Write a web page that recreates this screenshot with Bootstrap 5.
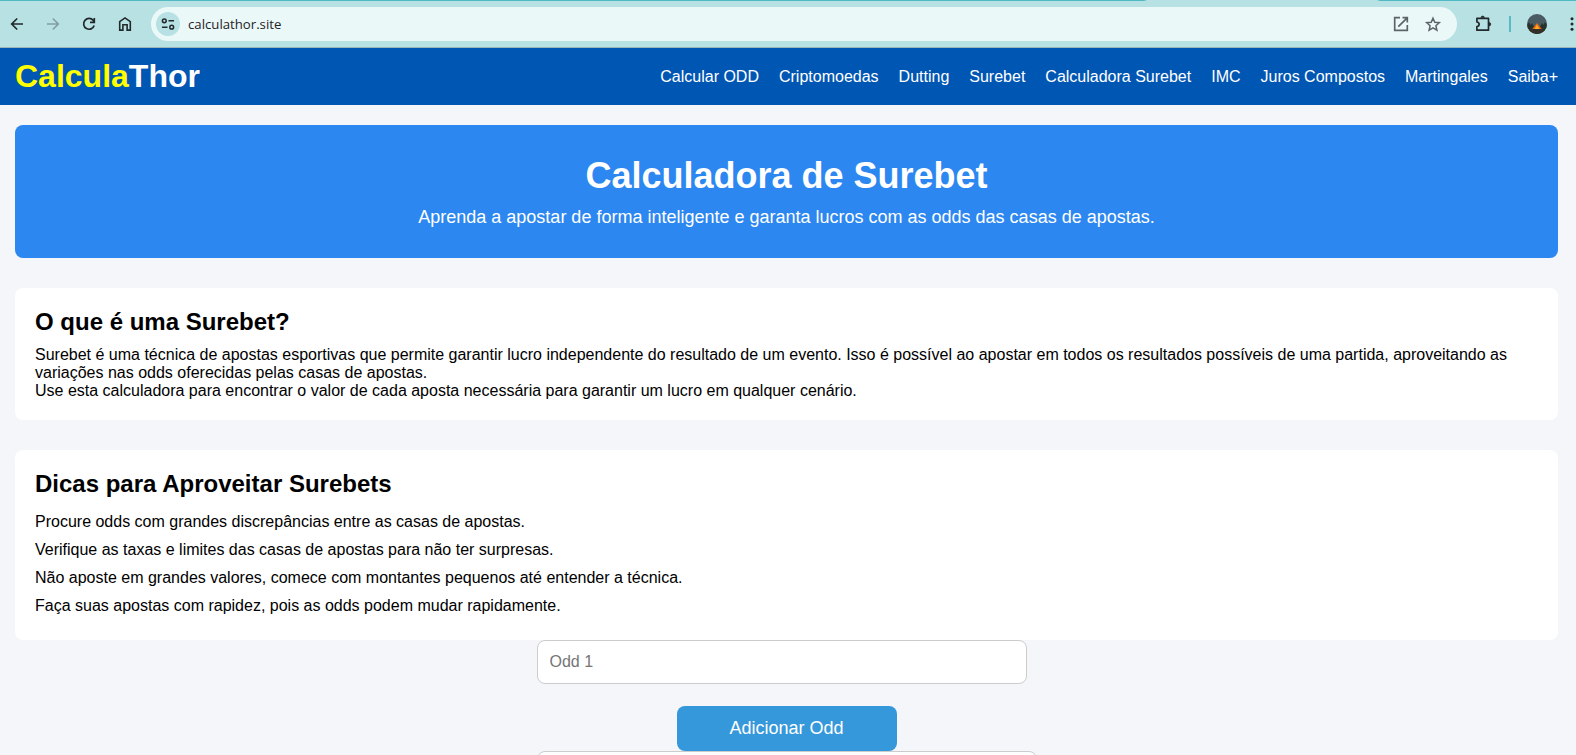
<!DOCTYPE html>
<html lang="pt-BR">
<head>
<meta charset="utf-8">
<meta name="viewport" content="width=device-width, initial-scale=1">
<title>CalculaThor</title>
<link href="https://cdn.jsdelivr.net/npm/bootstrap@5.3.0/dist/css/bootstrap.min.css" rel="stylesheet">
<style>
body{font-family:"Liberation Sans",Arial,sans-serif;font-size:16px;line-height:18px;background:#f4f6fa;color:#000;height:755px;overflow:hidden}
/* browser toolbar; the top line breaks under the active tab */
.toolbar{height:48px;background:linear-gradient(90deg,#4fb9c4 1144px,#b8e1e4 1147px,#b8e1e4 1377px,#4fb9c4 1380px) top/100% 1px no-repeat #b8e1e4;border-bottom:1px solid #9cb5b9;padding:1px 0 0 5px}
.toolbar svg{display:block;flex:none}
.tool{width:24px;height:24px;margin-right:12px}
.address{width:1306px;height:34px;background:#ebf8f8;margin-left:2px;padding:0 12px 0 5px;color:#1f2325}
.site-info{width:24px;height:24px;background:#b8e1e4}
.url{font-family:"Open Sans","Noto Sans",sans-serif;font-size:13.2px;line-height:20px;margin-left:8px}
.puzzle{margin-left:14px}
.sep{width:2px;height:16px;background:#57bac4;margin-left:14px}
.avatar{margin-left:16px}
.dots{margin-left:22px}
/* site */
.site-nav{height:57px;background:#0056b3;padding:0 18px 0 15px}
.brand{font-size:32px;line-height:36px;font-weight:700;color:#fff;padding-bottom:2px}
.brand span{color:#ff0}
.site-nav .nav{gap:20px}
.site-nav .nav-link{padding:0;color:#fff}
.page{padding:20px 18px 0 15px}
.hero{background:#2c87f0;border-radius:8px;padding:30px;height:133px;margin-bottom:30px}
.hero h1{font-size:36px;line-height:42px;font-weight:700;margin-bottom:10px}
.hero p{font-size:18px;line-height:21px}
.panel{background:#fff;border-radius:8px;padding:20px}
.panel h2{font-size:24px;line-height:28px;font-weight:700;margin-bottom:10px}
.tips-panel{margin-top:30px;height:190px}
.tips{padding-top:5px}
.tips li{margin-bottom:10px}
.calc{width:500px}
.odd{height:44px;border:1px solid #ccc;border-radius:8px;padding:12px;font-size:16px;line-height:18px;background:#fff}
.odd::placeholder{color:#757575}
.odd-first{width:490px}
.add{width:220px;height:45px;margin-top:22px;border-radius:8px;background:#3498db;border:0;color:#fff;font-size:18px;line-height:20px;padding:0 0 2px}
.add:hover{background:#2980b9;color:#fff}
</style>
<script src="https://cdn.jsdelivr.net/npm/bootstrap@5.3.0/dist/js/bootstrap.bundle.min.js"></script>
</head>
<body>
<div class="toolbar d-flex align-items-center">
  <svg class="tool" viewBox="0 0 24 24" fill="none" stroke="#22292b" stroke-width="1.700"><path d="M18 12H7.200M12.200 6.500 6.700 12l5.500 5.500"/></svg>
  <svg class="tool" viewBox="0 0 24 24" fill="none" stroke="#829fa3" stroke-width="1.700"><path d="M6 12h10.800M11.800 6.500l5.500 5.500-5.500 5.500"/></svg>
  <svg class="tool" viewBox="0 0 24 24" fill="none" stroke="#22292b" stroke-width="1.700"><path d="M17.200 13.500a5.400 5.400 0 1 1-.9-5l1 1.300M17.300 6v4.300H13"/></svg>
  <svg class="tool" viewBox="0 0 24 24" fill="none" stroke="#22292b" stroke-width="1.600"><path d="M6.700 9.700 12 5.900l5.300 3.800v8.400h-3.200v-5.400H9.900v5.400H6.700z"/></svg>
  <div class="address rounded-pill d-flex align-items-center">
    <span class="site-info rounded-circle"><svg width="24" height="24" viewBox="0 0 24 24" fill="none" stroke="#22292b" stroke-width="1.500"><circle cx="8.300" cy="8.800" r="1.900"/><path d="M12.500 8.800H18M6 15.200h5.500"/><circle cx="15.700" cy="15.200" r="1.900"/></svg></span>
    <span class="url">calculathor.site</span>
    <svg class="ms-auto" width="24" height="24" viewBox="0 0 24 24" fill="none" stroke="#5b6568" stroke-width="1.700"><path d="M11 5.700H5.700v12.600h12.600V13M13.500 5.700h4.800v4.800M18.200 5.800 9.300 14.700"/></svg>
    <svg class="ms-2" width="24" height="24" viewBox="0 0 24 24" fill="none" stroke="#5b6568" stroke-width="1.500"><path d="m12 6.200 1.800 4.100 4.500.4-3.400 3 1 4.400-3.900-2.300-3.900 2.300 1-4.400-3.400-3 4.500-.4z"/></svg>
  </div>
  <svg class="puzzle" width="24" height="24" viewBox="0 0 24 24" fill="none" stroke="#22292b" stroke-width="1.700" stroke-linejoin="round"><path d="M5.900 6.300h11.600v11.900H5.900v-3.600c3-.3 3-4.300 0-4.600z"/><path d="M10 5.800a1.700 1.700 0 0 1 3.400 0M18 10.500a1.700 1.700 0 0 1 0 3.400" fill="#22292b" stroke-width=".8"/></svg>
  <span class="sep"></span>
  <svg class="avatar" width="20" height="20" viewBox="0 0 20 20"><defs><clipPath id="disc"><circle cx="10" cy="10" r="10"/></clipPath></defs><g clip-path="url(#disc)"><path fill="#4a5b63" d="M0 0h20v20H0z"/><path fill="#26342d" d="m0 11 2-3 1.500 3L5 9l1.500 3h7L15 9l1.500 2L18 8l2 3v9H0z"/><path fill="#33302a" d="M2 15h16v5H2z"/><path fill="#e2681a" d="m10 9 4.800 6H5.200z"/><path fill="#ffae26" d="m10 10.500 2.300 4.500H7.700z"/></g></svg>
  <svg class="dots" width="6" height="24" viewBox="0 0 6 24" fill="#22292b"><circle cx="3" cy="6.800" r="1.500"/><circle cx="3" cy="12" r="1.500"/><circle cx="3" cy="17.200" r="1.500"/></svg>
</div>
<nav class="site-nav d-flex align-items-center justify-content-between">
  <div class="brand"><span>Calcula</span>Thor</div>
  <div class="nav flex-nowrap">
    <a class="nav-link" href="#">Calcular ODD</a>
    <a class="nav-link" href="#">Criptomoedas</a>
    <a class="nav-link" href="#">Dutting</a>
    <a class="nav-link" href="#">Surebet</a>
    <a class="nav-link" href="#">Calculadora Surebet</a>
    <a class="nav-link" href="#">IMC</a>
    <a class="nav-link" href="#">Juros Compostos</a>
    <a class="nav-link" href="#">Martingales</a>
    <a class="nav-link" href="#">Saiba+</a>
  </div>
</nav>
<main class="page">
  <section class="hero text-center text-white">
    <h1>Calculadora de Surebet</h1>
    <p class="mb-0">Aprenda a apostar de forma inteligente e garanta lucros com as odds das casas de apostas.</p>
  </section>
  <section class="panel">
    <h2>O que é uma Surebet?</h2>
    <p class="mb-0">Surebet é uma técnica de apostas esportivas que permite garantir lucro independente do resultado de um evento. Isso é possível ao apostar em todos os resultados possíveis de uma partida, aproveitando as variações nas odds oferecidas pelas casas de apostas.</p>
    <p class="mb-0">Use esta calculadora para encontrar o valor de cada aposta necessária para garantir um lucro em qualquer cenário.</p>
  </section>
  <section class="panel tips-panel">
    <h2>Dicas para Aproveitar Surebets</h2>
    <ul class="tips list-unstyled mb-0">
      <li>Procure odds com grandes discrepâncias entre as casas de apostas.</li>
      <li>Verifique as taxas e limites das casas de apostas para não ter surpresas.</li>
      <li>Não aposte em grandes valores, comece com montantes pequenos até entender a técnica.</li>
      <li>Faça suas apostas com rapidez, pois as odds podem mudar rapidamente.</li>
    </ul>
  </section>
  <form class="calc mx-auto">
    <input class="odd odd-first d-block" placeholder="Odd 1">
    <button class="add btn d-block mx-auto" type="button">Adicionar Odd</button>
    <input class="odd d-block w-100" aria-label="Valor">
  </form>
</main>
</body>
</html>
